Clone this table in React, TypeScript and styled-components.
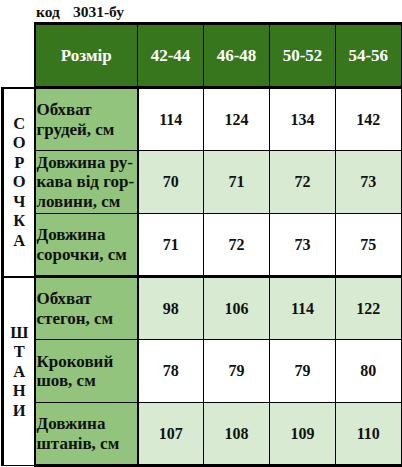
import React from 'react'
import styled, { createGlobalStyle } from 'styled-components'

const GlobalStyle = createGlobalStyle`
  body {
    margin: 0;
    background: #fff;
    font-family: "Liberation Serif", "Times New Roman", serif;
  }
`

const sizes = ['42-44', '46-48', '50-52', '54-56']

type Row = { label: string[]; values: number[] }

const sections: { title: string; rows: Row[] }[] = [
  {
    title: 'СОРОЧКА',
    rows: [
      { label: ['Обхват', 'грудей, см'], values: [114, 124, 134, 142] },
      { label: ['Довжина ру-', 'кава від гор-', 'ловини, см'], values: [70, 71, 72, 73] },
      { label: ['Довжина', 'сорочки, см'], values: [71, 72, 73, 75] },
    ],
  },
  {
    title: 'ШТАНИ',
    rows: [
      { label: ['Обхват', 'стегон, см'], values: [98, 106, 114, 122] },
      { label: ['Кроковий', 'шов, см'], values: [78, 79, 79, 80] },
      { label: ['Довжина', 'штанів, см'], values: [107, 108, 109, 110] },
    ],
  },
]

const Page = styled.div`
  width: 402px;
  display: flex;
  flex-direction: column;
`

const Code = styled.div`
  height: 22px;
  padding-left: 36px;
  display: flex;
  gap: 13px;
  font-size: 15.5px;
  font-weight: bold;
  line-height: 24px;
  color: #111;
`

const Table = styled.table`
  border-collapse: collapse;
  table-layout: fixed;
  width: 401px;
  margin-left: 1px;
  font-weight: bold;
  font-size: 16px;
  color: #111;
`

const Blank = styled.td`
  border: none;
  padding: 0;
`

const Head = styled.th<{ $thick?: boolean }>`
  height: 61px;
  padding: 0;
  background: #38761d;
  color: #fff;
  font-size: 17px;
  font-weight: bold;
  text-align: center;
  border-top: 3px solid #000;
  border-bottom: 3px solid #000;
  border-left: ${p => (p.$thick ? '2px' : '1px')} solid #000;
  border-right: 1px solid #000;
  &:last-child {
    border-right: 2px solid #000;
  }
`

const Section = styled.td`
  padding: 0;
  border-left: 3px solid #000;
  border-right: 2px solid #000;
  border-top: 2px solid #000;
  border-bottom: 3px solid #000;
  text-align: center;
  vertical-align: middle;
`

const Letters = styled.div`
  display: flex;
  flex-direction: column;
  align-items: center;
  line-height: 19.5px;
  font-size: 16.5px;
  padding-left: 1px;
`

const BodyRow = styled.tr<{ $first?: boolean; $last?: boolean }>`
  height: 63px;
  & > td {
    border-top: ${p => (p.$first ? '2px' : '1px')} solid #000;
    border-bottom: ${p => (p.$last ? '3px' : '1px')} solid #000;
  }
`

const Label = styled.td`
  background: #93c47d;
  padding: 0 0 0 1px;
  border-left: 2px solid #000;
  border-right: 2px solid #000;
  font-size: 17px;
  line-height: 19.5px;
  white-space: nowrap;
  vertical-align: middle;
`

const Value = styled.td<{ $shade?: boolean }>`
  background: ${p => (p.$shade ? '#d9ead3' : '#fff')};
  text-align: center;
  vertical-align: middle;
  padding: 0;
  border-left: 1px solid #000;
  border-right: 1px solid #000;
  &:last-child {
    border-right: 2px solid #000;
  }
`

export default function App() {
  return (
    <Page>
      <GlobalStyle />
      <Code>
        <span>код</span>
        <span>3031-бу</span>
      </Code>
      <Table>
        <colgroup>
          <col style={{ width: 32 }} />
          <col style={{ width: 103 }} />
          {sizes.map(s => (
            <col key={s} style={{ width: 66 }} />
          ))}
        </colgroup>
        <thead>
          <tr>
            <Blank />
            <Head $thick>Розмір</Head>
            {sizes.map(s => (
              <Head key={s}>{s}</Head>
            ))}
          </tr>
        </thead>
        <tbody>
          {sections.map((sec, si) =>
            sec.rows.map((row, ri) => (
              <BodyRow key={`${si}-${ri}`} $first={ri === 0} $last={ri === sec.rows.length - 1}>
                {ri === 0 && (
                  <Section rowSpan={sec.rows.length}>
                    <Letters>
                      {sec.title.split('').map((ch, i) => (
                        <span key={i}>{ch}</span>
                      ))}
                    </Letters>
                  </Section>
                )}
                <Label>
                  {row.label.map((l, i) => (
                    <div key={i}>{l}</div>
                  ))}
                </Label>
                {row.values.map((v, i) => (
                  <Value key={i} $shade={si === 0 ? ri % 2 === 1 : ri % 2 === 0}>
                    {v}
                  </Value>
                ))}
              </BodyRow>
            ))
          )}
        </tbody>
      </Table>
    </Page>
  )
}
